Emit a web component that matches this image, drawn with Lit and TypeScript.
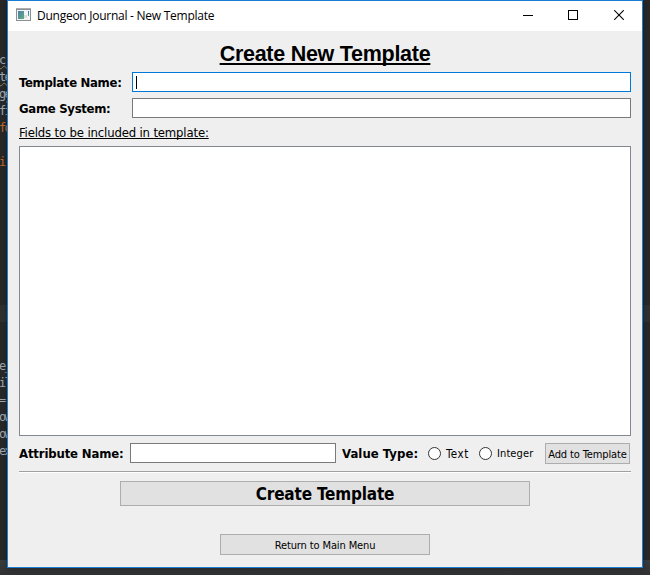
import { LitElement, html, css } from "lit";
import { customElement, property } from "lit/decorators.js";
import { classMap } from "lit/directives/class-map.js";

interface CodeLine {
  text: string;
  keyword?: boolean;
  typo?: boolean;
}

const CODE: Record<number, CodeLine> = {
  0: { text: "c:", typo: true },
  1: { text: "te", typo: true },
  2: { text: "ge", typo: true },
  3: { text: "fi" },
  4: { text: "fo", keyword: true },
  6: { text: "i:", keyword: true },
  18: { text: "e_" },
  19: { text: "il" },
  20: { text: "= " },
  21: { text: "ow" },
  22: { text: "ow" },
  23: { text: "ex" },
};

@customElement("code-gutter")
class CodeGutter extends LitElement {
  static styles = css`
    :host {
      display: block;
      overflow: hidden;
      padding-top: 52px;
      font: 12px "DejaVu Sans Mono", "Liberation Mono", monospace;
      letter-spacing: -1.8px;
      color: #a0a9b3;
    }
    .line {
      height: 17px;
      line-height: 17px;
      white-space: pre;
      margin-left: -1px;
    }
    .keyword {
      color: #c0692c;
    }
    .typo {
      text-decoration: underline wavy #8b8460 1px;
      text-underline-offset: 1px;
    }
  `;

  render() {
    return Array.from({ length: 24 }, (_, i) => {
      const line = CODE[i];
      return html`<div class=${classMap({ line: true, keyword: !!line?.keyword, typo: !!line?.typo })}>${line?.text ?? ""}</div>`;
    });
  }
}

@customElement("title-bar")
class TitleBar extends LitElement {
  @property() caption = "";

  static styles = css`
    :host {
      display: flex;
      height: 30px;
      background: #fff;
      color: #000;
      font: 12px/30px "Open Sans", "Noto Sans", sans-serif;
    }
    svg {
      display: block;
    }
    .icon {
      margin: 7px 0 0 8px;
    }
    .caption {
      flex: 1;
      margin-left: 6px;
      letter-spacing: -0.26px;
      white-space: nowrap;
    }
    .controls {
      display: flex;
      gap: 35px;
      margin: 9px 18px 0 0;
    }
  `;

  render() {
    return html`
      <svg class="icon" width="15" height="13" viewBox="0 0 15 13" shape-rendering="crispEdges">
        <defs>
          <linearGradient id="pane" x1="0" y1="0" x2="1" y2="1">
            <stop offset="0" stop-color="#4c7eae" />
            <stop offset="1" stop-color="#5fae79" />
          </linearGradient>
          <linearGradient id="bar" x1="0" y1="0" x2="0" y2="1">
            <stop offset="0" stop-color="#3f6fc0" />
            <stop offset="1" stop-color="#5fae79" />
          </linearGradient>
        </defs>
        <rect width="15" height="13" fill="#8b9095" />
        <rect x="1" y="2" width="13" height="10" fill="#f3f4f5" />
        <rect x="0" y="0" width="15" height="1" fill="#a9adb1" />
        <rect x="2" y="3" width="6" height="8" fill="url(#pane)" />
        <rect x="8" y="7" width="3" height="3" fill="#dcdfe2" />
        <rect x="12" y="3" width="1" height="5" fill="url(#bar)" />
      </svg>
      <span class="caption">${this.caption}</span>
      <div class="controls">
        <svg width="10" height="10" shape-rendering="crispEdges"><path d="M0 5.5H10" stroke="#000" /></svg>
        <svg width="10" height="10" shape-rendering="crispEdges"><rect x=".5" y=".5" width="9" height="9" fill="none" stroke="#000" /></svg>
        <svg width="11" height="10"><path d="M1.2 .2L10.8 9.8M10.8 .2L1.2 9.8" stroke="#000" stroke-width="1.1" /></svg>
      </div>
    `;
  }
}

@customElement("app-root")
class AppRoot extends LitElement {
  static styles = css`
    :host {
      display: grid;
      grid-template: 568px 7px / 7px 636px 7px;
      width: 650px;
      height: 575px;
      overflow: hidden;
      color: #000;
      font: 11px "DejaVu Sans Condensed", "DejaVu Sans", sans-serif;
      background:
        linear-gradient(#3a3d3f, #2f3133) 0 560px / 100% 15px no-repeat,
        linear-gradient(#303030, #303030) 0 305px / 100% 17px no-repeat,
        #282828;
    }
    .window {
      grid-area: 1 / 2;
      box-sizing: border-box;
      border: 1px solid #1a7fd4;
      background: #efefef;
      box-shadow: 0 1px 6px rgba(0, 0, 0, 0.3);
    }
    .content {
      display: flex;
      flex-direction: column;
      padding: 0 11px;
    }
    h1 {
      margin: 10px 0 0;
      height: 31px;
      text-align: center;
      font: bold 21.5px/27px "Liberation Sans", Arial, sans-serif;
      letter-spacing: -0.27px;
      text-decoration: underline 2px;
      text-underline-offset: 2px;
      text-decoration-skip-ink: none;
    }
    .form {
      display: grid;
      grid-template-columns: 113px 1fr;
      row-gap: 6px;
    }
    .label {
      font-size: 13px;
      font-weight: bold;
      line-height: 21px;
      height: 20px;
      white-space: nowrap;
      letter-spacing: -0.3px;
    }
    .label.attribute {
      width: 111px;
      letter-spacing: -0.15px;
    }
    .label.type {
      margin-left: 6px;
      width: 86px;
      letter-spacing: 0.05px;
    }
    .input,
    .list {
      box-sizing: border-box;
      background: #fff;
      border: 1px solid #7a7a7a;
    }
    .input {
      height: 20px;
      padding: 3px;
    }
    .input.focus {
      border-color: #0078d7;
    }
    .caret {
      width: 1px;
      height: 13px;
      background: #000;
    }
    .hint {
      margin-top: 6px;
      height: 22px;
      line-height: 17px;
      font-size: 13px;
      letter-spacing: -0.16px;
      text-decoration: underline 1px;
      text-underline-offset: 1px;
      text-decoration-skip-ink: none;
    }
    .list {
      height: 290px;
      border-color: #828790;
    }
    .attribute-row {
      display: flex;
      margin-top: 7px;
      height: 21px;
    }
    .attribute-row .input {
      width: 206px;
    }
    .radio {
      display: flex;
      align-items: center;
      line-height: 22px;
      white-space: nowrap;
    }
    .radio i {
      box-sizing: border-box;
      width: 13px;
      height: 13px;
      margin-right: 5px;
      border: 1px solid #333;
      border-radius: 50%;
      background: #fff;
    }
    .radio.text {
      width: 51px;
      font-size: 11.5px;
      letter-spacing: 0.5px;
    }
    .radio.integer {
      letter-spacing: 0.1px;
    }
    .button {
      box-sizing: border-box;
      height: 21px;
      border: 1px solid #adadad;
      background: #e1e1e1;
      text-align: center;
      line-height: 21px;
      white-space: nowrap;
      letter-spacing: -0.12px;
    }
    .add {
      width: 85px;
      margin: 0 1px 0 auto;
    }
    .rule {
      margin-top: 7px;
      height: 1px;
      background: #a0a0a0;
      border-bottom: 1px solid #fff;
    }
    .create {
      align-self: center;
      margin-top: 8px;
      width: 410px;
      height: 25px;
      font-size: 17px;
      font-weight: bold;
      line-height: 25px;
      letter-spacing: -0.18px;
    }
    .return {
      align-self: center;
      margin-top: 28px;
      width: 210px;
    }
    code-gutter {
      grid-area: 1 / 1;
    }
  `;

  render() {
    return html`
      <code-gutter></code-gutter>
      <div class="window">
        <title-bar caption="Dungeon Journal - New Template"></title-bar>
        <div class="content">
          <h1>Create New Template</h1>
          <div class="form">
            <div class="label">Template Name:</div>
            <div class="input focus"><div class="caret"></div></div>
            <div class="label">Game System:</div>
            <div class="input"></div>
          </div>
          <div class="hint">Fields to be included in template:</div>
          <div class="list"></div>
          <div class="attribute-row">
            <div class="label attribute">Attribute Name:</div>
            <div class="input"></div>
            <div class="label type">Value Type:</div>
            <div class="radio text"><i></i>Text</div>
            <div class="radio integer"><i></i>Integer</div>
            <div class="button add">Add to Template</div>
          </div>
          <div class="rule"></div>
          <div class="button create">Create Template</div>
          <div class="button return">Return to Main Menu</div>
        </div>
      </div>
    `;
  }
}
